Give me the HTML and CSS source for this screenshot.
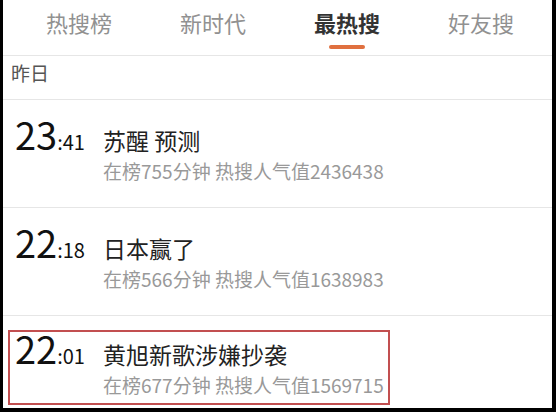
FILE: index.html
```html
<!DOCTYPE html>
<html lang="zh-CN">
<head>
    <meta charset="UTF-8">
    <meta name="viewport" content="width=device-width, initial-scale=1.0">
    <title>最热搜</title>
    <link rel="stylesheet" href="styles.css">
</head>
<body>
    <div class="frame">
        <div class="tabs">
            <div class="tab"><span class="tab-label">热搜榜</span></div>
            <div class="tab"><span class="tab-label">新时代</span></div>
            <div class="tab active"><span class="tab-label">最热搜</span><span class="tab-line"></span></div>
            <div class="tab"><span class="tab-label">好友搜</span></div>
        </div>

        <div class="day">昨日</div>

        <ul class="hot-list">
            <li class="hot-row">
                <div class="entry">
                    <div class="time"><span class="hour">23</span><span class="minute">:41</span></div>
                    <div class="info">
                        <div class="title">苏醒 预测</div>
                        <div class="meta">在榜755分钟 热搜人气值2436438</div>
                    </div>
                </div>
            </li>
            <li class="hot-row">
                <div class="entry">
                    <div class="time"><span class="hour">22</span><span class="minute">:18</span></div>
                    <div class="info">
                        <div class="title">日本赢了</div>
                        <div class="meta">在榜566分钟 热搜人气值1638983</div>
                    </div>
                </div>
            </li>
            <li class="hot-row">
                <div class="entry highlight">
                    <div class="time"><span class="hour">22</span><span class="minute">:01</span></div>
                    <div class="info">
                        <div class="title">黄旭新歌涉嫌抄袭</div>
                        <div class="meta">在榜677分钟 热搜人气值1569715</div>
                    </div>
                </div>
            </li>
        </ul>
    </div>
</body>
</html>
```

FILE: styles.css
```css
html, body {
    margin: 0;
    padding: 0;
    background-color: #000;
    overflow: hidden;
}
body {
    font-family: "Noto Sans CJK SC", "Noto Sans", sans-serif;
}
.frame {
    box-sizing: border-box;
    width: 556px;
    height: 412px;
    background: #fff;
    border-left: 3px solid #000;
    border-right: 4px solid #000;
    border-bottom: 4px solid #000;
    overflow: hidden;
}
.tabs {
    display: flex;
    height: 55px;
    padding-left: 9px;
    border-bottom: 1px solid #e6e6e6;
}
.tab {
    width: 134px;
    display: flex;
    flex-direction: column;
    align-items: center;
}
.tab-label {
    margin-top: 7px;
    height: 30px;
    line-height: 30px;
    font-size: 22px;
    color: #919191;
}
.tab.active .tab-label {
    color: #333;
    font-weight: bold;
}
.tab-line {
    margin-top: 8px;
    width: 36px;
    height: 4px;
    border-radius: 2px;
    background-color: #e0703f;
}
.day {
    height: 43px;
    line-height: 34px;
    padding-left: 8px;
    font-size: 19px;
    color: #555;
    border-bottom: 1px solid #e6e6e6;
}
.hot-list {
    list-style: none;
    margin: 0;
    padding: 0;
}
.hot-row {
    height: 107px;
    border-bottom: 1px solid #e6e6e6;
}
.entry {
    display: flex;
    align-items: baseline;
    padding: 19px 0 0 12px;
}
.time {
    width: 88px;
    flex-shrink: 0;
    line-height: 30px;
    color: #111;
}
.hour {
    font-size: 38px;
}
.minute {
    font-size: 20px;
}
.title {
    font-size: 23px;
    line-height: 30px;
    color: #222;
}
.meta {
    margin-top: 3px;
    font-size: 19px;
    line-height: 26px;
    color: #999;
}
.highlight {
    width: max-content;
    margin: 14px 0 0 5px;
    padding: 1px 4px 5px 5px;
    border: 2px solid #c24f50;
}
```
